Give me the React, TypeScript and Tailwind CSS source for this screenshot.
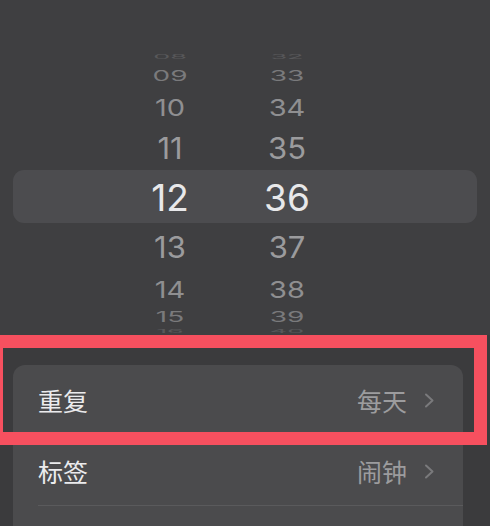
import React from "react";

type Row = {
  h: string;
  m: string;
  height: string;
  size: string;
  scale: string;
  color: string;
};

const rows: Row[] = [
  { h: "08", m: "32", height: "h-[16px]", size: "text-[27px]", scale: "scale-y-[0.22]", color: "text-[#58585a]" },
  { h: "09", m: "33", height: "h-[24px]", size: "text-[28px]", scale: "scale-y-[0.5]", color: "text-[#7a7a7c]" },
  { h: "10", m: "34", height: "h-[38px]", size: "text-[29px]", scale: "scale-y-[0.8]", color: "text-[#8f8f91]" },
  { h: "11", m: "35", height: "h-[44px]", size: "text-[31px]", scale: "scale-y-[0.95]", color: "text-[#9b9b9d]" },
];
const rowsBelow: Row[] = [
  { h: "13", m: "37", height: "h-[48px]", size: "text-[31px]", scale: "scale-y-[0.95]", color: "text-[#9b9b9d]" },
  { h: "14", m: "38", height: "h-[36px]", size: "text-[29px]", scale: "scale-y-[0.8]", color: "text-[#8f8f91]" },
  { h: "15", m: "39", height: "h-[20px]", size: "text-[28px]", scale: "scale-y-[0.5]", color: "text-[#7a7a7c]" },
  { h: "16", m: "40", height: "h-[8px]", size: "text-[27px]", scale: "scale-y-[0.2]", color: "text-[#58585a]" },
];

const numFont = { fontFamily: "Inter, 'Liberation Sans', sans-serif" };
const cjkFont = { fontFamily: "'Noto Sans CJK SC', 'Noto Sans', sans-serif" };

function WheelRow({ r }: { r: Row }) {
  return (
    <div className={`flex items-center pl-[130px] gap-[37px] ${r.height} shrink-0 overflow-visible`}>
      <div className={`w-[80px] text-center leading-none ${r.size} ${r.color} ${r.scale}`} style={numFont}>
        {r.h}
      </div>
      <div className={`w-[80px] text-center leading-none ${r.size} ${r.color} ${r.scale}`} style={numFont}>
        {r.m}
      </div>
    </div>
  );
}

function Chevron() {
  return (
    <svg width="11" height="15" viewBox="0 0 11 15" fill="none">
      <path d="M2 1.5 L8.5 7.5 L2 13.5" stroke="#7a7a7c" strokeWidth="2" strokeLinecap="round" strokeLinejoin="round" />
    </svg>
  );
}

function ListRow({ label, value, border, h }: { label: string; value: string; border: boolean; h: string }) {
  return (
    <div className={`flex items-center ${h} pl-[25px]`}>
      <div className={`flex flex-1 items-center h-full pr-[28px] ${border ? "border-b border-[#5a5a5c]" : ""}`}>
        <span className="text-[25px] leading-none text-[#ebebed]" style={cjkFont}>
          {label}
        </span>
        <span className="ml-auto text-[25px] leading-none text-[#9c9c9e]" style={cjkFont}>
          {value}
        </span>
        <span className="ml-[17px] flex items-center">
          <Chevron />
        </span>
      </div>
    </div>
  );
}

export default function App() {
  return (
    <div className="w-[490px] h-[526px] overflow-hidden bg-[#3f3f41] flex flex-col">
      <div className="h-[335px] shrink-0 overflow-hidden pt-[48px] flex flex-col">
        {rows.map((r) => (
          <WheelRow key={r.h} r={r} />
        ))}
        <div className="mx-[13px] h-[53px] shrink-0 rounded-[11px] bg-[#4c4c4f] flex items-center pl-[117px] gap-[37px]">
          <div className="w-[80px] text-center leading-none text-[37px] text-[#e8e8ea] translate-y-[1px]" style={numFont}>
            12
          </div>
          <div className="w-[80px] text-center leading-none text-[37px] text-[#e8e8ea] translate-y-[1px]" style={numFont}>
            36
          </div>
        </div>
        {rowsBelow.map((r) => (
          <WheelRow key={r.h} r={r} />
        ))}
      </div>
      <div className="relative flex-1 bg-[#3b3b3d] pt-[30px]">
        <div className="mx-[13px] w-[450px] rounded-[12px] bg-[#4b4b4d] flex flex-col">
          <ListRow label="重复" value="每天" border h="h-[72px]" />
          <ListRow label="标签" value="闹钟" border h="h-[69px]" />
          <div className="h-[40px]" />
        </div>
        <div className="absolute left-[-10px] top-0 w-[497px] h-[110px] border-[13px] border-[#f6505f] pointer-events-none" />
      </div>
    </div>
  );
}
